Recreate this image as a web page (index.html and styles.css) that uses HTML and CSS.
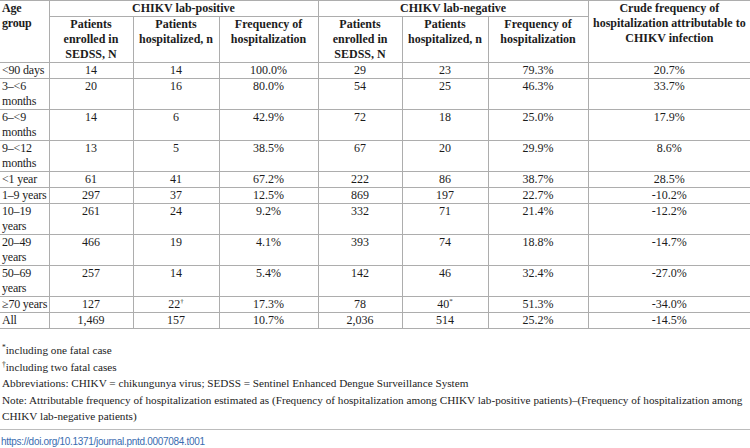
FILE: index.html
```html
<!DOCTYPE html>
<html lang="en">
<head>
<meta charset="utf-8">
<title>Table</title>
<link rel="stylesheet" href="styles.css">
</head>
<body>
<table class="tbl">
  <colgroup>
    <col class="c-age">
    <col class="c-enr">
    <col class="c-hos">
    <col class="c-frq">
    <col class="c-enr">
    <col class="c-hos">
    <col class="c-frq2">
    <col class="c-crude">
  </colgroup>
  <thead>
    <tr>
      <th rowspan="2" class="age">Age group</th>
      <th colspan="3">CHIKV lab-positive</th>
      <th colspan="3">CHIKV lab-negative</th>
      <th rowspan="2">Crude frequency of hospitalization attributable to CHIKV infection</th>
    </tr>
    <tr>
      <th>Patients enrolled in SEDSS, N</th>
      <th>Patients hospitalized, n</th>
      <th>Frequency of hospitalization</th>
      <th>Patients enrolled in SEDSS, N</th>
      <th>Patients hospitalized, n</th>
      <th>Frequency of hospitalization</th>
    </tr>
  </thead>
  <tbody>
    <tr><td class="age">&lt;90 days</td><td>14</td><td>14</td><td>100.0%</td><td>29</td><td>23</td><td>79.3%</td><td>20.7%</td></tr>
    <tr><td class="age">3–&lt;6 months</td><td>20</td><td>16</td><td>80.0%</td><td>54</td><td>25</td><td>46.3%</td><td>33.7%</td></tr>
    <tr><td class="age">6–&lt;9 months</td><td>14</td><td>6</td><td>42.9%</td><td>72</td><td>18</td><td>25.0%</td><td>17.9%</td></tr>
    <tr><td class="age">9–&lt;12 months</td><td>13</td><td>5</td><td>38.5%</td><td>67</td><td>20</td><td>29.9%</td><td>8.6%</td></tr>
    <tr><td class="age">&lt;1 year</td><td>61</td><td>41</td><td>67.2%</td><td>222</td><td>86</td><td>38.7%</td><td>28.5%</td></tr>
    <tr><td class="age">1–9 years</td><td>297</td><td>37</td><td>12.5%</td><td>869</td><td>197</td><td>22.7%</td><td>-10.2%</td></tr>
    <tr><td class="age">10–19 years</td><td>261</td><td>24</td><td>9.2%</td><td>332</td><td>71</td><td>21.4%</td><td>-12.2%</td></tr>
    <tr><td class="age">20–49 years</td><td>466</td><td>19</td><td>4.1%</td><td>393</td><td>74</td><td>18.8%</td><td>-14.7%</td></tr>
    <tr><td class="age">50–69 years</td><td>257</td><td>14</td><td>5.4%</td><td>142</td><td>46</td><td>32.4%</td><td>-27.0%</td></tr>
    <tr><td class="age one">≥70 years</td><td>127</td><td>22<sup>†</sup></td><td>17.3%</td><td>78</td><td>40<sup>*</sup></td><td>51.3%</td><td>-34.0%</td></tr>
    <tr><td class="age">All</td><td>1,469</td><td>157</td><td>10.7%</td><td>2,036</td><td>514</td><td>25.2%</td><td>-14.5%</td></tr>
  </tbody>
</table>
<div class="notes">
  <p><sup>*</sup>including one fatal case</p>
  <p><sup>†</sup>including two fatal cases</p>
  <p>Abbreviations: CHIKV = chikungunya virus; SEDSS = Sentinel Enhanced Dengue Surveillance System</p>
  <p>Note: Attributable frequency of hospitalization estimated as (Frequency of hospitalization among CHIKV lab-positive patients)–(Frequency of hospitalization among CHIKV lab-negative patients)</p>
</div>
<div class="doi">https://doi.org/10.1371/journal.pntd.0007084.t001</div>
</body>
</html>
```

FILE: styles.css
```css
html, body {
  margin: 0;
  padding: 0;
  background: #ffffff;
}
body {
  width: 750px;
  font-family: "Liberation Serif", "Times New Roman", serif;
  color: #1c1c1c;
}
.tbl {
  width: 750px;
  table-layout: fixed;
  border-collapse: collapse;
  font-size: 12px;
  line-height: 15px;
}
.c-age { width: 49px; }
.c-enr { width: 84px; }
.c-hos { width: 86px; }
.c-frq { width: 99px; }
.c-frq2 { width: 100px; }
.c-crude { width: 162px; }
.tbl th,
.tbl td {
  border: 1px solid #adadad;
  padding: 0 2px;
  text-align: center;
  vertical-align: top;
}
.tbl tr > :first-child { border-left: none; }
.tbl tr > :last-child { border-right: none; }
.tbl thead tr:nth-child(2) > :first-child { border-left: 1px solid #adadad; }
.tbl th { font-weight: bold; }
.tbl .age {
  text-align: left;
  padding: 0 0 0 2px;
  letter-spacing: -0.2px;
}
.tbl .one { white-space: nowrap; }
.tbl sup {
  font-size: 7px;
  line-height: 0;
  vertical-align: 5px;
}
.notes {
  margin-top: 13px;
  font-size: 11.2px;
  line-height: 16.5px;
  padding-left: 2px;
}
.notes p { margin: 0; }
.notes sup {
  font-size: 7.5px;
  line-height: 0;
  vertical-align: 4px;
}
.doi {
  margin-top: 4px;
  border-top: 1px solid #bcbcbc;
  padding-top: 5px;
  font-family: "Liberation Sans", "Arial", sans-serif;
  font-size: 10px;
  letter-spacing: -0.3px;
  line-height: 14px;
  color: #3a6cb0;
  padding-left: 1px;
}
```
